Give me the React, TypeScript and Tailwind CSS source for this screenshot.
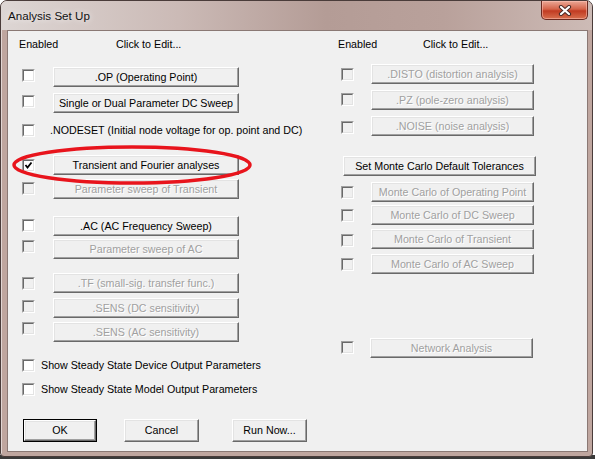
import React from 'react';

type CheckProps = { checked?: boolean; disabled?: boolean; className?: string };

function CheckBox({ checked, disabled, className = '' }: CheckProps) {
  return (
    <div
      className={`w-[13px] h-[13px] shrink-0 border border-t-[#a0a0a0] border-l-[#a0a0a0] border-r-white border-b-white ${className}`}
    >
      <div
        className={`w-full h-full border border-t-[#696969] border-l-[#696969] border-r-[#e3e3e3] border-b-[#e3e3e3] ${
          disabled ? 'bg-[#f0f0f0]' : 'bg-white'
        }`}
      >
        {checked && (
          <svg width="9" height="9" viewBox="0 0 9 9" className="block">
            <path d="M1.5 4 L3.5 6.5 L7.5 1.5" fill="none" stroke="#000" strokeWidth="1.8" />
          </svg>
        )}
      </div>
    </div>
  );
}

type BtnProps = { label: string; disabled?: boolean; className?: string };

function Btn({ label, disabled, className = '' }: BtnProps) {
  return (
    <button
      type="button"
      className={`shrink-0 flex items-center justify-center bg-[#f0f0f0] border border-t-white border-l-white border-r-[#696969] border-b-[#696969] shadow-[inset_-1px_-1px_0_#a0a0a0,inset_1px_1px_0_#e3e3e3] whitespace-nowrap ${
        disabled ? 'text-[#a0a0a0] [text-shadow:1px_1px_0_#fff]' : 'text-black'
      } ${className}`}
    >
      {label}
    </button>
  );
}

type RowProps = {
  label: string;
  checked?: boolean;
  disabled?: boolean;
  rowClass: string;
  cbClass: string;
  btnClass: string;
};

function Row({ label, checked, disabled, rowClass, cbClass, btnClass }: RowProps) {
  return (
    <div className={`flex items-start ${rowClass}`}>
      <CheckBox checked={checked} disabled={disabled} className={cbClass} />
      <Btn label={label} disabled={disabled} className={btnClass} />
    </div>
  );
}

const L_BTN = 'ml-[18px] w-[186px] h-[20px]';
const R_BTN = 'ml-[17px] w-[163px] h-[20px]';

export default function App() {
  return (
    <div className="relative w-[595px] h-[459px] overflow-hidden bg-[linear-gradient(to_bottom,#ffffff_455px,#3a3a3a_455px)] font-['Liberation_Sans',Arial,sans-serif] text-[10.7px] leading-[13px] text-black">
      <div className="w-[593px] h-[457px] rounded-t-[7px] rounded-b-[4px] border border-[#4a3c3a] bg-[#bfa69f] shadow-[inset_1px_1px_0_#e2d6d3]">
        {/* title bar */}
        <div className="h-[29px] flex items-start justify-between rounded-t-[6px] bg-[linear-gradient(to_right,#ddd6d4,#cbbab6_30%,#b49c96_55%,#b9a19b_75%,#cdbbb6)]">
          <div className="pl-[7px] pt-[8px] text-[11.6px] leading-[14px] text-[#111] [text-shadow:0_0_6px_#fff]">
            Analysis Set Up
          </div>
          <div className="mr-[4px] w-[47px] h-[19px] rounded-b-[5px] border border-t-0 border-[#6b2a20] bg-[linear-gradient(to_bottom,#eba896,#d5644a_45%,#c13b22_55%,#d8704e)] flex items-center justify-center shadow-[inset_0_0_0_1px_rgba(255,200,190,0.5)]">
            <svg width="14" height="11" viewBox="0 0 14 11">
              <path d="M3 2 L11 9 M11 2 L3 9" stroke="#4a2a26" strokeWidth="4.2" strokeLinecap="round" />
              <path d="M3 2 L11 9 M11 2 L3 9" stroke="#ffffff" strokeWidth="2.2" strokeLinecap="round" />
            </svg>
          </div>
        </div>

        {/* client area */}
        <div className="ml-[6px] w-[581px] h-[422px] border border-[#8a7874] bg-[#f0f0f0] flex">
          {/* left column */}
          <div className="ml-[11px] w-[319px] pt-[7px] flex flex-col">
            <div className="flex h-[13px]">
              <span className="w-[97px]">Enabled</span>
              <span>Click to Edit...</span>
            </div>
            <Row label=".OP (Operating Point)" rowClass="mt-[16px]" cbClass="ml-[3px] mt-[2px]" btnClass={L_BTN} />
            <Row label="Single or Dual Parameter DC Sweep" rowClass="mt-[6px]" cbClass="ml-[3px] mt-[2px]" btnClass={L_BTN} />
            <div className="mt-[7px] h-[20px] flex items-center">
              <CheckBox className="ml-[3px] mt-[1px]" />
              <span className="ml-[15px] whitespace-nowrap">.NODESET (Initial node voltage for op. point and DC)</span>
            </div>
            <Row label="Transient and Fourier analyses" checked rowClass="mt-[15px]" cbClass="ml-[3px] mt-[4px]" btnClass={L_BTN} />
            <Row label="Parameter sweep of Transient" disabled rowClass="mt-[4px]" cbClass="ml-[3px] mt-[3px]" btnClass={L_BTN} />
            <Row label=".AC (AC Frequency Sweep)" rowClass="mt-[17px]" cbClass="ml-[3px] mt-[3px]" btnClass={L_BTN} />
            <Row label="Parameter sweep of AC" disabled rowClass="mt-[3px]" cbClass="ml-[3px] mt-[1px]" btnClass={L_BTN} />
            <Row label=".TF (small-sig. transfer func.)" disabled rowClass="mt-[14px]" cbClass="ml-[3px] mt-[4px]" btnClass={L_BTN} />
            <Row label=".SENS (DC sensitivity)" disabled rowClass="mt-[5px]" cbClass="ml-[3px] mt-[2px]" btnClass={L_BTN} />
            <Row label=".SENS (AC sensitivity)" disabled rowClass="mt-[4px]" cbClass="ml-[3px]" btnClass={L_BTN} />
            <div className="mt-[17px] h-[13px] flex items-center">
              <CheckBox className="ml-[3px]" />
              <span className="ml-[6px] whitespace-nowrap">Show Steady State Device Output Parameters</span>
            </div>
            <div className="mt-[11px] h-[13px] flex items-center">
              <CheckBox className="ml-[3px]" />
              <span className="ml-[6px] whitespace-nowrap">Show Steady State Model Output Parameters</span>
            </div>
            <div className="mt-[23px] flex">
              <div className="ml-[4px] w-[74px] h-[23px] border border-black">
                <Btn label="OK" className="w-full h-full" />
              </div>
              <Btn label="Cancel" className="ml-[27px] w-[75px] h-[23px]" />
              <Btn label="Run Now..." className="ml-[33px] w-[75px] h-[23px]" />
            </div>
          </div>

          {/* right column */}
          <div className="w-[240px] pt-[7px] flex flex-col">
            <div className="flex h-[13px]">
              <span className="w-[85px]">Enabled</span>
              <span>Click to Edit...</span>
            </div>
            <Row label=".DISTO (distortion analysis)" disabled rowClass="mt-[13px]" cbClass="ml-[3px] mt-[4px]" btnClass={R_BTN} />
            <Row label=".PZ (pole-zero analysis)" disabled rowClass="mt-[6px]" cbClass="ml-[3px] mt-[3px]" btnClass={R_BTN} />
            <Row label=".NOISE (noise analysis)" disabled rowClass="mt-[6px]" cbClass="ml-[3px] mt-[5px]" btnClass={R_BTN} />
            <Btn label="Set Monte Carlo Default Tolerances" className="mt-[20px] ml-[5px] w-[193px] h-[20px]" />
            <Row label="Monte Carlo of Operating Point" disabled rowClass="mt-[6px]" cbClass="ml-[3px] mt-[4px]" btnClass={R_BTN} />
            <Row label="Monte Carlo of DC Sweep" disabled rowClass="mt-[3px]" cbClass="ml-[3px] mt-[4px]" btnClass={R_BTN} />
            <Row label="Monte Carlo of Transient" disabled rowClass="mt-[4px]" cbClass="ml-[3px] mt-[5px]" btnClass={R_BTN} />
            <Row label="Monte Carlo of AC Sweep" disabled rowClass="mt-[5px]" cbClass="ml-[3px] mt-[4px]" btnClass={R_BTN} />
            <Row label="Network Analysis" disabled rowClass="mt-[64px]" cbClass="ml-[3px] mt-[3px]" btnClass="ml-[16px] w-[163px] h-[20px]" />
          </div>
        </div>
      </div>

      {/* red annotation ellipse */}
      <svg className="absolute left-0 top-0 pointer-events-none" width="595" height="459">
        <ellipse cx="132" cy="165" rx="118" ry="18" fill="none" stroke="#e8141c" strokeWidth="3.5" />
      </svg>
    </div>
  );
}
